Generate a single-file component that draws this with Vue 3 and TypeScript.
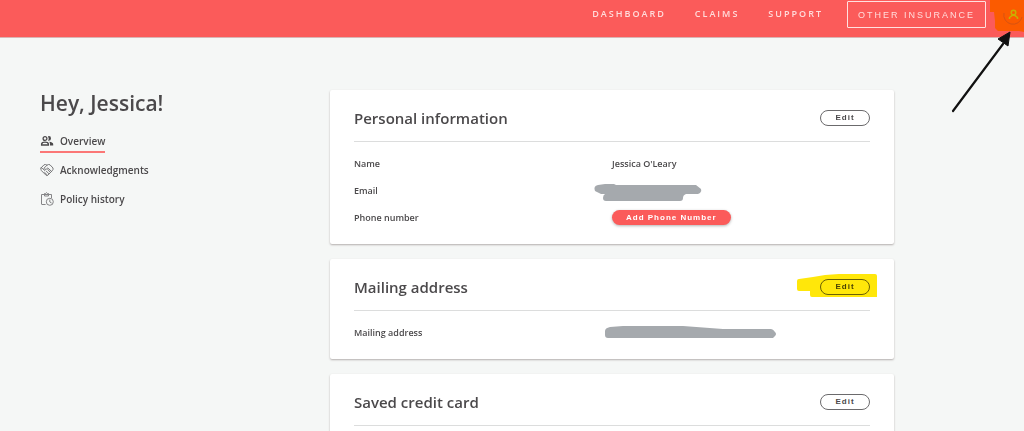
<script setup lang="ts">
interface Row {
  label: string
  value?: string
  action?: string
  redaction?: { width: number; height: number; path: string; kind: string }
}

interface Card {
  title: string
  highlighted?: boolean
  rows: Row[]
}

const links: string[] = ['Dashboard', 'Claims', 'Support']

const sections = [
  { id: 'overview', label: 'Overview' },
  { id: 'acknowledgments', label: 'Acknowledgments' },
  { id: 'history', label: 'Policy history' },
]

const cards: Card[] = [
  {
    title: 'Personal information',
    rows: [
      { label: 'Name', value: "Jessica O'Leary" },
      {
        label: 'Email',
        redaction: {
          width: 110,
          height: 20,
          kind: 'email',
          path: 'M5 2 L12 1 H21 L23 2 H103 L108 6 Q109 8 107 10 L105 11 H93 Q90 12 90 15 Q90 18 87 18 H13 Q10 18 10 15 Q10 12 12 11 H8 L2 8 Q0 3 5 2Z',
        },
      },
      { label: 'Phone number', action: 'Add Phone Number' },
    ],
  },
  {
    title: 'Mailing address',
    highlighted: true,
    rows: [
      {
        label: 'Mailing address',
        redaction: {
          width: 172,
          height: 14,
          kind: 'address',
          path: 'M5 1 L18 0 H78 L118 3 H166 Q168 3 170 6 Q172 8 170 10 L168 12 H3 Q0 12 0 9 V5 Q0 2 5 1Z',
        },
      },
    ],
  },
  { title: 'Saved credit card', rows: [] },
]
</script>

<template>
  <div class="page">
    <header class="topbar">
      <nav class="nav" aria-label="Main">
        <a v-for="link in links" :key="link" class="nav-link" href="#">{{ link }}</a>
      </nav>
      <button class="other" type="button">OTHER INSURANCE</button>
      <a class="account" href="#" aria-label="Account">
        <svg class="account-art" width="34" height="32" viewBox="0 0 34 32" aria-hidden="true">
          <path d="M0 0H34V32L29 31H8L5 28V21L4 12H0Z" fill="#fb5b00" />
          <path d="M14 13A9 9 0 0 0 32 17" fill="none" stroke="#d65312" stroke-width="1" />
          <circle cx="23.5" cy="12.5" r="2.3" fill="none" stroke="#c9b000" stroke-width="1.4" />
          <path d="M19.5 19V17.5L22.3 15.3H24.7L27.5 17.5V19" fill="none" stroke="#c9b000" stroke-width="1.5" />
        </svg>
      </a>
      <svg class="arrow" width="64" height="84" viewBox="0 0 64 84" aria-hidden="true">
        <path d="M4 80L54 13" fill="none" stroke="#111" stroke-width="2.2" stroke-linecap="round" />
        <path d="M61 1L59 15L49 8Z" fill="#111" stroke="#111" stroke-linejoin="round" />
      </svg>
    </header>

    <div class="layout">
      <aside class="sidebar">
        <h1 class="greeting">Hey, Jessica!</h1>
        <ul class="menu">
          <li v-for="(section, index) in sections" :key="section.id">
            <a class="menu-link" :class="{ active: index === 0 }" href="#">
              <svg v-if="section.id === 'overview'" width="14" height="14" viewBox="0 0 14 14" fill="none" stroke="#4b494b" stroke-width="1.3" aria-hidden="true">
                <circle cx="5" cy="4.5" r="1.9" />
                <path d="M1.6 11V10Q2 8.2 5 8.2Q8 8.2 8.4 10V11Z" />
                <path d="M8 2.2Q11 1.6 11 4.5Q11 7 8 6.8Q9.4 4.5 8 2.2Z" fill="#4b494b" stroke="none" />
                <path d="M9.2 7.7Q13.2 8.2 13.2 10.2V11.6H10V10Q10 8.6 9.2 7.7Z" fill="#4b494b" stroke="none" />
              </svg>
              <svg v-else-if="section.id === 'acknowledgments'" width="14" height="14" viewBox="0 0 14 14" fill="none" stroke="#78787a" stroke-width="1" stroke-linejoin="round" stroke-linecap="round" aria-hidden="true">
                <path d="M1 5L4 1.8Q5.5 1 7 2.2Q8.5 1 10 1.8L13 5Q13.4 6.5 12.4 7.6L7.6 12.4Q7 13 6.2 12.4L1.4 7.6Q.6 6.4 1 5Z" />
                <path d="M7 2.2L4 5.2Q4.4 7 6.2 6.2L7.8 5L11.8 8.6M6.2 8L9 10.8M4.6 9.4L7.3 12M7.8 6.6L10.4 9.4M2.4 5.4L4.6 7.4" />
              </svg>
              <svg v-else width="14" height="14" viewBox="0 0 14 14" fill="none" stroke="#858587" stroke-width="1" aria-hidden="true">
                <path d="M5.6 12.5H2Q1.5 12.5 1.5 12V2.5H11.5V6" />
                <path d="M4.5 2.5V1.5H5.5L6.5 .6L7.5 1.5H8.5V4H4.5Z" />
                <circle cx="9.8" cy="9.8" r="3.5" />
                <path d="M9.8 7.5V10L11.6 11" />
              </svg>
              <span>{{ section.label }}</span>
            </a>
          </li>
        </ul>
      </aside>

      <main class="cards">
        <section v-for="card in cards" :key="card.title" class="card">
          <header class="card-head">
            <h2 class="card-title">{{ card.title }}</h2>
            <div class="edit-wrap">
              <button class="edit" type="button" :aria-label="`Edit ${card.title}`">Edit</button>
              <svg v-if="card.highlighted" class="marker" width="80" height="24" viewBox="0 0 80 24" aria-hidden="true">
                <path d="M0 7Q0 5 2 5L16 3L28 1L42 0H78Q80 0 80 2V23H15Q13 23 13 21V17H2Q0 17 0 15Z" fill="#ffe70a" />
              </svg>
            </div>
          </header>
          <dl class="rows">
            <div v-for="row in card.rows" :key="row.label" class="row">
              <dt>{{ row.label }}</dt>
              <dd>
                <span v-if="row.value">{{ row.value }}</span>
                <button v-if="row.action" class="add" type="button">{{ row.action }}</button>
                <svg
                  v-if="row.redaction"
                  class="redaction"
                  :class="row.redaction.kind"
                  :width="row.redaction.width"
                  :height="row.redaction.height"
                  aria-hidden="true"
                >
                  <path :d="row.redaction.path" fill="#a5a9ad" />
                </svg>
              </dd>
            </div>
          </dl>
        </section>
      </main>
    </div>
  </div>
</template>

<style>
body {
  margin: 0;
  background: #f5f7f6;
}
</style>

<style scoped>
.page {
  height: 100vh;
  overflow: hidden;
  background: #f5f7f6;
  color: #4b494b;
  font-family: 'Open Sans', 'Noto Sans', sans-serif;
}

.topbar {
  position: relative;
  display: flex;
  align-items: flex-start;
  justify-content: flex-end;
  height: 37px;
  background: #fb5b5a;
  border-bottom: 1px solid #d9b5b4;
}

.nav {
  display: flex;
  gap: 29px;
  margin-right: 24px;
}

.nav-link {
  color: #ffdcdb;
  font-size: 9px;
  font-weight: 600;
  line-height: 28px;
  letter-spacing: 2px;
  text-transform: uppercase;
  text-decoration: none;
}

.other {
  box-sizing: border-box;
  height: 27px;
  margin: 1px 4px 0 0;
  padding: 0 10px;
  border: 1px solid #ffe1e0;
  border-radius: 1px;
  background: transparent;
  color: #ffdcdb;
  font: 9px/24px 'Liberation Sans', Arial, sans-serif;
  letter-spacing: 2px;
}

.account {
  display: block;
  height: 32px;
}

.account-art {
  display: block;
}

.arrow {
  position: absolute;
  top: 31px;
  right: 11px;
  z-index: 2;
}

.layout {
  display: grid;
  grid-template-columns: 290px 1fr;
  padding: 52px 130px 0 40px;
}

.greeting {
  margin: 0 0 14px;
  font-size: 21px;
  font-weight: 600;
  line-height: 27px;
}

.menu {
  display: flex;
  flex-direction: column;
  gap: 7px;
  margin: 0;
  padding: 0;
  list-style: none;
}

.menu li {
  display: flex;
}

.menu-link {
  display: flex;
  align-items: center;
  gap: 6px;
  height: 20px;
  border-bottom: 2px solid transparent;
  color: #4b494b;
  font-size: 10px;
  font-weight: 600;
  text-decoration: none;
}

.menu-link.active {
  border-bottom-color: #fb7776;
}

.cards {
  display: flex;
  flex-direction: column;
  gap: 15px;
}

.card {
  padding: 0 24px;
  border-radius: 2px;
  background: #fff;
  box-shadow: 0 1px 2px rgba(60, 40, 40, 0.35);
}

.card-head {
  display: flex;
  align-items: center;
  justify-content: space-between;
  padding: 16px 0 11px;
  border-bottom: 1px solid #dcdddd;
}

.card-title {
  margin: 0;
  font-size: 15px;
  font-weight: 600;
  line-height: 24px;
}

.edit-wrap {
  position: relative;
  display: flex;
}

.edit {
  box-sizing: border-box;
  width: 50px;
  height: 16px;
  padding: 0;
  border: 1px solid #6b6a6c;
  border-radius: 8px;
  background: #fff;
  color: #4b494b;
  font: bold 8px/12px 'Liberation Sans', Arial, sans-serif;
  letter-spacing: 1px;
}

.marker {
  position: absolute;
  top: -5px;
  right: -7px;
  mix-blend-mode: multiply;
  pointer-events: none;
}

.rows {
  margin: 0;
  padding: 8px 0 13px;
}

.row {
  display: grid;
  grid-template-columns: 1fr 1fr;
  align-items: center;
  height: 27px;
  font-size: 9px;
  font-weight: 600;
  line-height: 14px;
}

.row dd {
  position: relative;
  display: flex;
  align-items: center;
  height: 27px;
  margin: 0;
}

.add {
  height: 15px;
  padding: 0 14px;
  border: 0;
  border-radius: 8px;
  background: #fb5b5a;
  box-shadow: 0 1px 3px rgba(0, 0, 0, 0.3);
  color: #fff;
  font: bold 8px/14px 'Liberation Sans', Arial, sans-serif;
  letter-spacing: 1px;
}

.redaction {
  position: absolute;
}

.redaction.email {
  top: 6px;
  left: -19px;
}

.redaction.address {
  top: 7px;
  left: -7px;
}
</style>
